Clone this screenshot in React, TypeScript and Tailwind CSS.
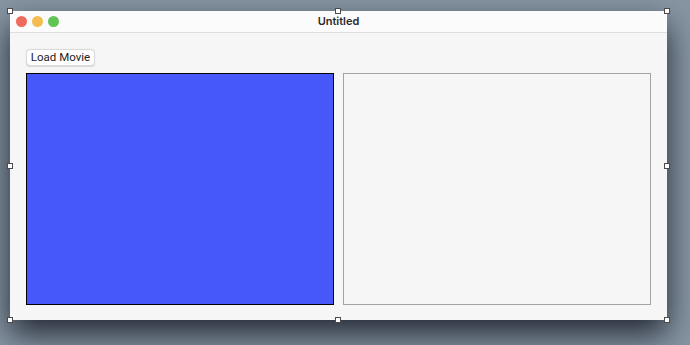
import React from "react";

function Handle({ className }: { className: string }) {
  return (
    <div
      className={`absolute w-[6px] h-[6px] bg-white border border-[#4a4a4a] ${className}`}
    />
  );
}

export default function App() {
  return (
    <div
      className="w-[690px] h-[345px] overflow-hidden bg-[#8896a4] pt-[11px] pl-[10px]"
      style={{ fontFamily: "Inter, 'Liberation Sans', sans-serif" }}
    >
      <div className="relative w-[657px] h-[309px] bg-[#f6f6f6] flex flex-col shadow-[0_14px_30px_rgba(15,20,30,0.85)]">
        <div className="relative h-[22px] bg-[#fbfbfb] border-b border-[#dedede] flex items-center justify-center shrink-0">
          <div className="absolute left-[6px] top-[5px] flex gap-[5px]">
            <div className="w-[11px] h-[11px] rounded-full bg-[#ee6a5f]" />
            <div className="w-[11px] h-[11px] rounded-full bg-[#f5bd4f]" />
            <div className="w-[11px] h-[11px] rounded-full bg-[#61c454]" />
          </div>
          <span className="text-[11px] font-semibold text-[#2a2a2a]">Untitled</span>
        </div>
        <div className="flex flex-col pt-[16px] pl-[16px]">
          <button
            className="w-[69px] h-[17px] bg-white border border-[#d9d9d9] rounded-[4px] shadow-[0_0.5px_1px_rgba(0,0,0,0.12)] text-[11.5px] leading-none text-[#222] flex items-center justify-center whitespace-nowrap"
            style={{ fontFamily: "Roboto, 'Liberation Sans', sans-serif" }}
          >
            Load Movie
          </button>
          <div className="flex gap-[9px] mt-[7px]">
            <div className="w-[308px] h-[232px] bg-[#4758fb] border border-black" />
            <div className="w-[308px] h-[232px] bg-[#f6f6f6] border border-[#a3a3a3]" />
          </div>
        </div>
        <Handle className="-left-[3px] -top-[3px]" />
        <Handle className="left-[325px] -top-[3px]" />
        <Handle className="-right-[3px] -top-[3px]" />
        <Handle className="-left-[3px] top-[152px]" />
        <Handle className="-right-[3px] top-[152px]" />
        <Handle className="-left-[3px] -bottom-[3px]" />
        <Handle className="left-[325px] -bottom-[3px]" />
        <Handle className="-right-[3px] -bottom-[3px]" />
      </div>
    </div>
  );
}
